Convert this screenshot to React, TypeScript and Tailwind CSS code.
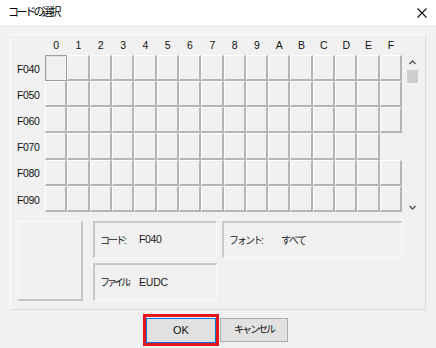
const COLS = ["0", "1", "2", "3", "4", "5", "6", "7", "8", "9", "A", "B", "C", "D", "E", "F"];
const ROWS = ["F040", "F050", "F060", "F070", "F080", "F090"];

const FONT = "font-['Liberation_Sans','Noto_Sans_CJK_JP',sans-serif]";

function Cell({ row, col }: { row: number; col: number }) {
  // F07F is not a valid code, so the cell is left empty
  if (row === 3 && col === 15) return <div />;
  if (row === 0 && col === 0) {
    return (
      <div className="border border-[#a0a0a0] shadow-[inset_1px_1px_0_#e2e2e2] border-b-[#9a9a9a]" />
    );
  }
  return <div className="border-t border-l border-t-white border-l-white border-r-2 border-b-2 border-r-[#b4b4b4] border-b-[#b4b4b4]" />;
}

function InfoBox({
  label,
  value,
  labelCls,
  valueCls,
  className,
}: {
  label: string;
  value: string;
  labelCls: string;
  valueCls: string;
  className: string;
}) {
  return (
    <div
      className={`flex items-center whitespace-nowrap border-t-2 border-l-2 border-r border-b border-t-[#c9c9c9] border-l-[#c9c9c9] border-r-[#f9f9f9] border-b-[#f9f9f9] pl-[5px] text-[#1a1a1a] ${className}`}
    >
      <span className={`shrink-0 text-[10px] ${labelCls}`}>{label}</span>
      <span className={valueCls}>{value}</span>
    </div>
  );
}

export default function App() {
  return (
    <div className={`h-[348px] w-[436px] overflow-hidden bg-[#f1f1f1] ${FONT}`}>
      <div className="flex h-[25px] items-center justify-between bg-white pl-[8px] pr-[8px]">
        <span className="text-[11px] tracking-[-2.5px] text-black">コードの選択</span>
        <svg width="10" height="10" viewBox="0 0 10 10" className="mr-[1px]">
          <path d="M0.5 0.5 L9.5 9.5 M9.5 0.5 L0.5 9.5" stroke="#111" strokeWidth="1.1" />
        </svg>
      </div>

      <div className="px-[10px] pt-[9px]">
        <div className="h-[276px] w-[416px] border border-t-[#fbfbfb] border-l-[#fbfbfb] border-r-[#dcdcdc] border-b-[#dcdcdc]">
          <div className="flex h-[20px] items-center pl-[34px]">
            <div className="grid w-[357px] grid-cols-[repeat(16,minmax(0,1fr))] pt-[1px]">
              {COLS.map((c) => (
                <span key={c} className="text-center text-[10.5px] text-[#111]">
                  {c}
                </span>
              ))}
            </div>
          </div>

          <div className="flex">
            <div className="grid h-[157px] w-[34px] grid-rows-6 pl-[6px]">
              {ROWS.map((r) => (
                <span key={r} className="flex items-center pt-[3px] text-[10.5px] tracking-[-0.4px] text-[#111]">
                  {r}
                </span>
              ))}
            </div>
            <div className="grid h-[157px] w-[357px] grid-cols-[repeat(16,minmax(0,1fr))] grid-rows-6">
              {ROWS.map((r, ri) => COLS.map((c, ci) => <Cell key={r + c} row={ri} col={ci} />))}
            </div>
            <div className="ml-[2px] flex h-[157px] w-[16px] flex-col items-center pt-[5px]">
              <svg width="7" height="5" viewBox="0 0 7 5">
                <path d="M0.5 4 L3.5 1 L6.5 4" fill="none" stroke="#505050" strokeWidth="1.3" />
              </svg>
              <div className="mt-[5px] h-[13px] w-[11px] bg-[#cdcdcd]" />
              <div className="flex-1" />
              <svg width="7" height="5" viewBox="0 0 7 5" className="mb-[2px]">
                <path d="M0.5 1 L3.5 4 L6.5 1" fill="none" stroke="#505050" strokeWidth="1.3" />
              </svg>
            </div>
          </div>

          <div className="mt-[9px] flex pl-[6px]">
            <div className="h-[80px] w-[66px] border-t border-l border-t-[#fafafa] border-l-[#fafafa] border-r-2 border-b-2 border-r-[#c6c6c6] border-b-[#c6c6c6]" />
            <div className="ml-[10px] flex flex-col gap-[5px]">
              <InfoBox
                label="コード:"
                value="F040"
                labelCls="w-[39px] tracking-[-2px]"
                valueCls="text-[10.5px] tracking-[-0.4px]"
                className="h-[37px] w-[124px]"
              />
              <InfoBox
                label="ファイル:"
                value="EUDC"
                labelCls="w-[39px] tracking-[-3px]"
                valueCls="text-[10.5px] tracking-[-0.2px]"
                className="h-[38px] w-[124px]"
              />
            </div>
            <div className="ml-[5px]">
              <InfoBox
                label="フォント:"
                value="すべて"
                labelCls="w-[52px] tracking-[-2px]"
                valueCls="text-[10px] tracking-[-1.5px]"
                className="h-[37px] w-[180px]"
              />
            </div>
          </div>
        </div>
      </div>

      <div className="flex items-center pl-[143px] pt-[4px]">
        <div className="border-[3px] border-[#e8141c] p-0">
          <button className="h-[25px] w-[70px] border border-[#0078d7] bg-[#e1e1e1] text-[11px] text-[#111] shadow-[inset_0_0_0_1px_#e1e1e1]">
            OK
          </button>
        </div>
        <button className="ml-[1px] h-[24px] w-[68px] border border-[#adadad] bg-[#e1e1e1] text-[10px] tracking-[-2px] text-[#111]">
          キャンセル
        </button>
      </div>
    </div>
  );
}
